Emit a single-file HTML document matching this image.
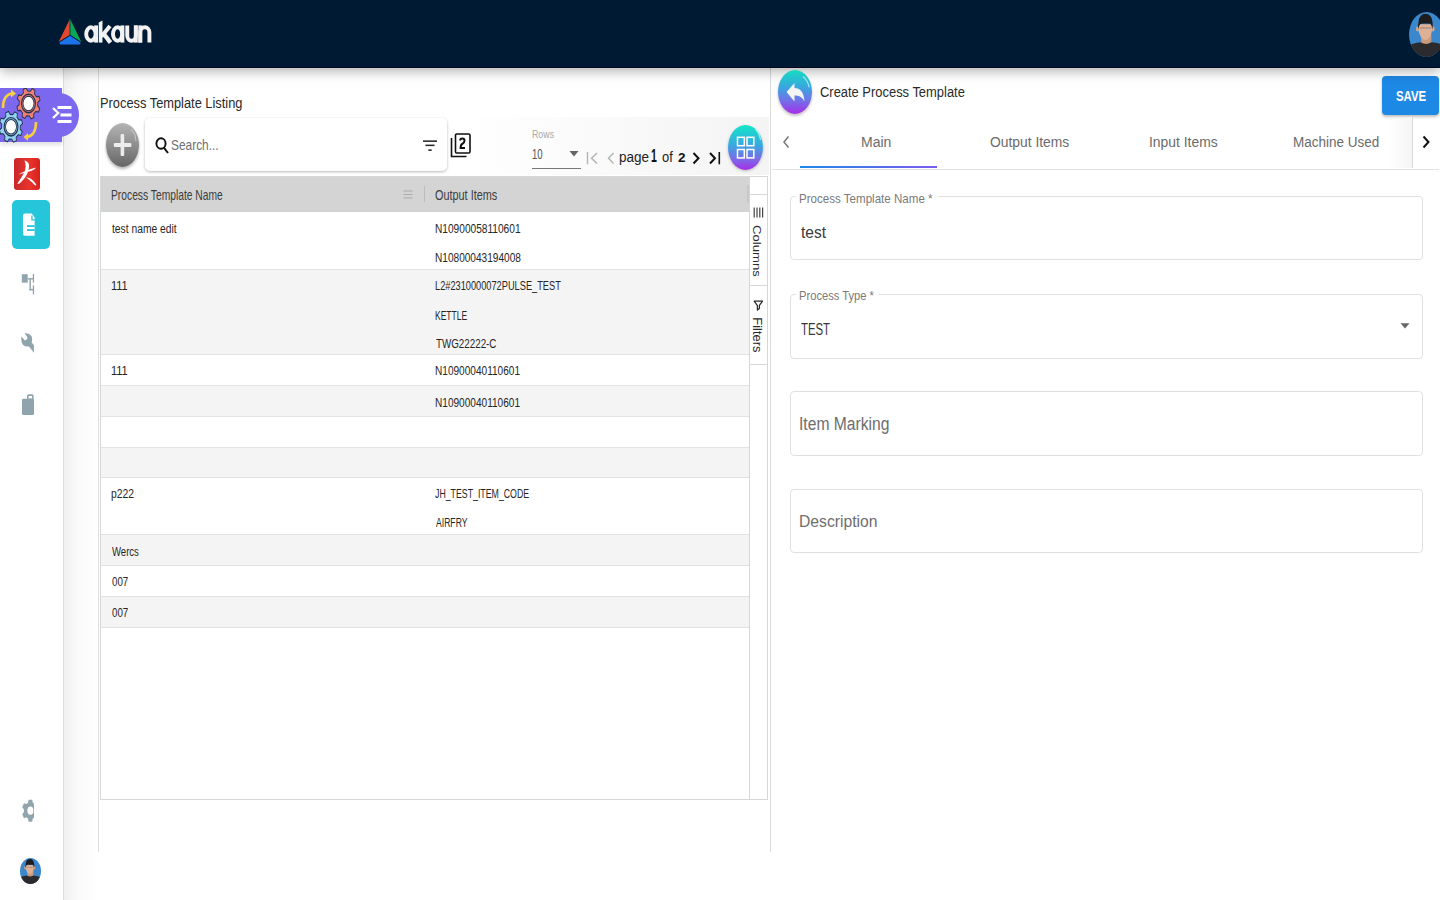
<!DOCTYPE html>
<html><head><meta charset="utf-8">
<style>
*{margin:0;padding:0;box-sizing:border-box}
html,body{width:1440px;height:900px;overflow:hidden;background:#fff;font-family:"Liberation Sans",sans-serif;position:relative}
.a{position:absolute}
.t{position:absolute;white-space:nowrap;line-height:1;transform-origin:0 0}
</style></head><body>
<!-- sidebar -->
<div class="a" style="left:0;top:68px;width:63px;height:832px;background:#fff"></div>
<div class="a" style="left:63px;top:68px;width:1px;height:832px;background:#dcdcdc"></div>
<div class="a" style="left:64px;top:68px;width:34px;height:832px;background:linear-gradient(90deg,#f0f0f0,#fafafa 40%,#fff)"></div>
<!-- main panels -->
<div class="a" style="left:98px;top:68px;width:1px;height:784px;background:#dedede"></div>
<div class="a" style="left:770px;top:68px;width:1px;height:784px;background:#dadada"></div>
<!-- toolbar gradient -->
<div class="a" style="left:460px;top:117px;width:309px;height:58px;background:linear-gradient(90deg,#fff,#f4f4f4)"></div>
<!-- grid -->
<div class="a" style="left:100px;top:176px;width:668px;height:624px;border:1px solid #d5d8db;background:#fff"></div>
<div class="a" style="left:101px;top:177px;width:648px;height:35px;background:#d4d4d4;border-bottom:1.6px solid #cdd2d5"></div>
<div class="a" style="left:749px;top:177px;width:1px;height:623px;background:#d5d8db"></div>
<div class="a" style="left:750px;top:194px;width:17px;height:1px;background:#d5d8db"></div>
<div class="a" style="left:750px;top:285px;width:17px;height:1px;background:#d5d8db"></div>
<div class="a" style="left:750px;top:364px;width:17px;height:1px;background:#d5d8db"></div>
<!-- rows -->
<div class="a" style="left:101px;top:269px;width:648px;height:86px;background:#f4f4f4"></div>
<div class="a" style="left:101px;top:385px;width:648px;height:31px;background:#f4f4f4"></div>
<div class="a" style="left:101px;top:447px;width:648px;height:31px;background:#f4f4f4"></div>
<div class="a" style="left:101px;top:534px;width:648px;height:32px;background:#f4f4f4"></div>
<div class="a" style="left:101px;top:596px;width:648px;height:31px;background:#f4f4f4"></div>
<div class="a" style="left:101px;top:269px;width:648px;height:1px;background:#dfe3e6"></div>
<div class="a" style="left:101px;top:354px;width:648px;height:1px;background:#dfe3e6"></div>
<div class="a" style="left:101px;top:385px;width:648px;height:1px;background:#dfe3e6"></div>
<div class="a" style="left:101px;top:416px;width:648px;height:1px;background:#dfe3e6"></div>
<div class="a" style="left:101px;top:447px;width:648px;height:1px;background:#dfe3e6"></div>
<div class="a" style="left:101px;top:477px;width:648px;height:1px;background:#dfe3e6"></div>
<div class="a" style="left:101px;top:534px;width:648px;height:1px;background:#dfe3e6"></div>
<div class="a" style="left:101px;top:565px;width:648px;height:1px;background:#dfe3e6"></div>
<div class="a" style="left:101px;top:596px;width:648px;height:1px;background:#dfe3e6"></div>
<div class="a" style="left:101px;top:627px;width:648px;height:1px;background:#dfe3e6"></div>
<!-- search box -->
<div class="a" style="left:145px;top:118px;width:302px;height:53px;background:#fff;border-radius:5px;box-shadow:0 1px 3px rgba(0,0,0,.28)"></div>
<!-- right panel -->
<div class="a" style="left:772px;top:169px;width:667px;height:1px;background:#e3e3e3"></div>
<div class="a" style="left:800px;top:165.5px;width:137px;height:2.3px;background:linear-gradient(90deg,#1e88e5,#7b5cf0)"></div>
<div class="a" style="left:1382px;top:76px;width:57px;height:39px;background:#1e88e5;border-radius:4px;box-shadow:0 2px 3px rgba(0,0,0,.25)"></div>
<!-- fields -->
<div class="a" style="left:790px;top:196px;width:633px;height:64px;border:1px solid #e0e0e0;border-radius:4px"></div>
<div class="a" style="left:790px;top:294px;width:633px;height:65px;border:1px solid #e0e0e0;border-radius:4px"></div>
<div class="a" style="left:790px;top:391px;width:633px;height:65px;border:1px solid #e0e0e0;border-radius:4px"></div>
<div class="a" style="left:790px;top:489px;width:633px;height:64px;border:1px solid #e0e0e0;border-radius:4px"></div>
<div class="a" style="left:796px;top:194px;width:142px;height:4px;background:#fff"></div>
<div class="a" style="left:796px;top:292px;width:83px;height:4px;background:#fff"></div>
<!-- header -->
<div class="a" style="left:0;top:0;width:1440px;height:68px;background:#011a33;border-bottom:1px solid #000a20;box-shadow:0 3px 12px rgba(0,0,0,.32)"></div>

<!-- logo triangle -->
<svg class="a" style="left:57px;top:18px" width="26" height="28" viewBox="0 0 26 28">
 <path d="M12.6,1.4 Q13,0.9 13,1.6 V17 L2.3,23.8 Q1.8,24 2,23.3 Q7,13 12.6,1.4 Z" fill="#e4472b"/>
 <path d="M13.4,1.4 Q13,0.9 13,1.6 V17 L23.7,23.8 Q24.2,24 24,23.3 Q19,13 13.4,1.4 Z" fill="#07a75a"/>
 <path d="M13,17.6 L23.2,24.3 Q24,25.2 23,26.2 Q22.3,26.6 21,26.6 H5 Q3.7,26.6 3,26.2 Q2,25.2 2.8,24.3 Z" fill="#1b73ea"/>
 <path d="M13,1.5 V17 M2.5,23.8 L13,17.2 L23.5,23.8" fill="none" stroke="#011a33" stroke-width="0.7"/>
</svg>
<svg class="a" style="left:80px;top:15px" width="75" height="33" viewBox="0 0 75 33">
 <g fill="none" stroke="#f2f2f2">
  <ellipse cx="10.9" cy="19" rx="4.7" ry="6.7" stroke-width="3.9"/>
  <line x1="16.05" y1="10.4" x2="16.05" y2="27.6" stroke-width="3.9"/>
  <line x1="20.6" y1="8.5" x2="20.6" y2="27.6" stroke-width="3.7"/>
  <line x1="21.5" y1="21.5" x2="30" y2="11" stroke-width="4"/>
  <line x1="23.5" y1="18.5" x2="30.5" y2="27.6" stroke-width="4.3"/>
  <ellipse cx="37.6" cy="19" rx="4.6" ry="6.7" stroke-width="3.9"/>
  <line x1="42.4" y1="10.4" x2="42.4" y2="27.6" stroke-width="3.9"/>
  <path d="M47.25,10.4 V20.5 A4.3,5.2 0 0 0 55.85,20.5 V10.4" stroke-width="3.9"/>
  <line x1="55.85" y1="10.4" x2="55.85" y2="27.6" stroke-width="3.9"/>
  <line x1="60.25" y1="10.4" x2="60.25" y2="27.6" stroke-width="3.9"/>
  <path d="M60.25,27.6 V17.5 A4.55,5.2 0 0 1 69.4,17.5 V27.6" stroke-width="3.9"/>
 </g>
 <polygon points="18.75,7.6 22.45,5.6 22.45,9 18.75,9" fill="#f2f2f2"/>
</svg>
<!-- top avatar -->
<div class="a" style="left:1409px;top:12px;width:35px;height:45px;border-radius:50%;overflow:hidden"><svg width="100%" height="100%" viewBox="0 0 36 44" preserveAspectRatio="none" style="display:block">
   <rect width="36" height="44" fill="#3b87cb"/>
   <rect x="12.5" y="22" width="10.5" height="10" fill="#c99a7c"/>
   <path d="M0,33 Q4,30 12,29.5 Q17.5,33 23,29.5 Q31,30 36,33 V44 H0 Z" fill="#2b2b2d"/>
   <ellipse cx="8.8" cy="16.5" rx="1.6" ry="2.6" fill="#d2a688"/>
   <ellipse cx="24.8" cy="16.5" rx="1.6" ry="2.6" fill="#d2a688"/>
   <path d="M9.5,12 Q9.5,26 17,27.5 Q24,26 24,12 Z" fill="#dcb196"/>
   <path d="M9.8,10 Q8.5,14 9.6,17 Q10.3,12 12.5,11.5 Q18,11 22,11.5 Q23.5,13 24,17 Q25,13 24,9 Q23,2 17,1.8 Q10.5,2 9.8,10 Z" fill="#1d1d1f"/>
   <rect x="11" y="15" width="12" height="1.2" fill="#8f7a70" opacity=".7"/>
</svg></div>
<!-- sidebar purple banner -->
<div class="a" style="left:0;top:88px;width:62px;height:54px;background:#7b68ee;box-shadow:0 3px 4px rgba(0,0,0,.12)"></div>
<div class="a" style="left:40px;top:93px;width:39px;height:44px;border-radius:50%;background:#7b68ee"></div>
<svg class="a" style="left:50px;top:104px" width="24" height="21" viewBox="0 0 24 21">
 <polyline points="3,4 8.2,9 3,14" fill="none" stroke="#fff" stroke-width="2.3"/>
 <rect x="7.5" y="2" width="14" height="3" fill="#fff"/>
 <rect x="10.5" y="9.5" width="11" height="3" fill="#fff"/>
 <rect x="7.5" y="16" width="14" height="3" fill="#fff"/>
</svg>
<svg class="a" style="left:0;top:88px" width="42" height="56" viewBox="0 0 42 56">
 <g transform="translate(28.5,15.5) scale(0.91,1.21)">
  <path d="M10.09,2.05 L12.35,4.06 L10.90,7.09 L7.91,6.59 L5.69,8.58 L5.86,11.60 L2.69,12.72 L0.93,10.26 L-2.05,10.09 L-4.06,12.35 L-7.09,10.90 L-6.59,7.91 L-8.58,5.69 L-11.60,5.86 L-12.72,2.69 L-10.26,0.93 L-10.09,-2.05 L-12.35,-4.06 L-10.90,-7.09 L-7.91,-6.59 L-5.69,-8.58 L-5.86,-11.60 L-2.69,-12.72 L-0.93,-10.26 L2.05,-10.09 L4.06,-12.35 L7.09,-10.90 L6.59,-7.91 L8.58,-5.69 L11.60,-5.86 L12.72,-2.69 L10.26,-0.93 Z" fill="#ee7f74" stroke="#23304e" stroke-width="0.9"/>
  <circle cx="0" cy="0" r="7.6" fill="none" stroke="#23304e" stroke-width="1.2"/>
  <circle cx="0" cy="0" r="6.0" fill="#fff" stroke="#23304e" stroke-width="0.9"/>
 </g>
 <g transform="translate(11,38.8) scale(0.91,1.21)">
  <path d="M10.09,2.05 L12.35,4.06 L10.90,7.09 L7.91,6.59 L5.69,8.58 L5.86,11.60 L2.69,12.72 L0.93,10.26 L-2.05,10.09 L-4.06,12.35 L-7.09,10.90 L-6.59,7.91 L-8.58,5.69 L-11.60,5.86 L-12.72,2.69 L-10.26,0.93 L-10.09,-2.05 L-12.35,-4.06 L-10.90,-7.09 L-7.91,-6.59 L-5.69,-8.58 L-5.86,-11.60 L-2.69,-12.72 L-0.93,-10.26 L2.05,-10.09 L4.06,-12.35 L7.09,-10.90 L6.59,-7.91 L8.58,-5.69 L11.60,-5.86 L12.72,-2.69 L10.26,-0.93 Z" fill="#92d3f2" stroke="#23304e" stroke-width="0.9"/>
  <circle cx="0" cy="0" r="7.6" fill="none" stroke="#23304e" stroke-width="1.2"/>
  <circle cx="0" cy="0" r="6.0" fill="#fff" stroke="#23304e" stroke-width="0.9"/>
 </g>
 <path d="M3,20 C3,11 6,6.5 12,5.5" fill="none" stroke="#f6d03c" stroke-width="2.6"/>
 <polygon points="11,1.5 16,5.5 11,9.5" fill="#f6d03c"/>
 <path d="M36,34 C36,43 33,48 27,49" fill="none" stroke="#f6d03c" stroke-width="2.6"/>
 <polygon points="28,45 23.5,49 28,53" fill="#f6d03c"/>
</svg>
<!-- red icon -->
<div class="a" style="left:14px;top:158px;width:26px;height:32px;border-radius:3px;background:linear-gradient(90deg,#c8262a,#e8352c 60%,#d8201c)"></div>
<svg class="a" style="left:14px;top:158px" width="26" height="32" viewBox="0 0 26 32">
 <path d="M10.5,2.5 C13,3 15.5,5 15,9 C14.5,15 11,21 5.5,25.5 L3.5,26 C4,24 8,19 10.5,14 C12,10 12,6 10.5,2.5 Z" fill="#fff"/>
 <path d="M4.5,16.5 C9,14 15,11 22,9.5 C21,11.5 19,12.5 16,13.2 C12,14.2 8,15.5 4.5,16.5 Z" fill="#fff"/>
 <path d="M12,19.5 C15,19.5 19,21 22.5,27 C22,27.5 21,27.5 20.5,27 C18,24 15,21.5 12,19.5 Z" fill="#fff"/>
</svg>
<!-- teal doc icon -->
<div class="a" style="left:11.6px;top:200px;width:38.2px;height:48.5px;border-radius:5px;background:#26c6da"></div>
<svg class="a" style="left:23px;top:213px" width="12" height="24" viewBox="0 0 12 24">
 <path d="M2,0.6 H8.6 L11.6,4.2 V22.8 H2 Q0,22.8 0,20.8 V2.6 Q0,0.6 2,0.6 Z" fill="#fff"/>
 <polyline points="8.9,2.6 8.9,6.9 11.8,6.9" fill="none" stroke="#26c6da" stroke-width="1.3"/>
 <rect x="4" y="12.2" width="7.6" height="1.8" fill="#26c6da"/>
 <rect x="4" y="16.2" width="7.6" height="1.8" fill="#26c6da"/>
</svg>
<!-- gray icons -->
<svg class="a" style="left:21px;top:274px" width="14" height="21" viewBox="0 0 14 21">
 <rect x="0.8" y="0.2" width="5.9" height="8.5" fill="#90a4ae"/>
 <rect x="6.5" y="4.1" width="6.4" height="1.4" fill="#90a4ae"/>
 <rect x="11.8" y="0" width="1.3" height="8.6" fill="#90a4ae"/>
 <rect x="8.5" y="5" width="1.4" height="11.4" fill="#90a4ae"/>
 <rect x="8.5" y="14.9" width="4.4" height="1.5" fill="#90a4ae"/>
 <rect x="11.8" y="11.4" width="1.3" height="9" fill="#90a4ae"/>
</svg>
<svg class="a" style="left:20px;top:332px" width="15" height="22" viewBox="0 0 15 22">
 <path d="M1.4,4.6 L5,8.5 Q8,7.2 7.2,5 L4.6,1.2 Q9.5,0.6 11.8,4.8 Q12.6,8 11.6,10.6 L13.9,13 L14,20.8 L9,14.4 Q5.5,15.2 3.2,13 Q0.8,10.5 1.4,4.6 Z" fill="#90a4ae"/>
</svg>
<svg class="a" style="left:21px;top:394px" width="14" height="22" viewBox="0 0 14 22">
 <rect x="1" y="4.8" width="12" height="16.2" rx="1.3" fill="#90a4ae"/>
 <path d="M6,5 V1.8 Q6,0.3 7.5,0.3 H11.2 Q12.6,0.3 12.6,1.8 V5 Z M7.6,2 V4.6 H11 V2 Z" fill="#90a4ae" fill-rule="evenodd"/>
</svg>
<!-- settings gear bottom -->
<svg class="a" style="left:21px;top:799px" width="13" height="24" viewBox="0 0 13 24">
 <path d="M6.99,3.79 L7.61,0.74 L11.19,0.74 L11.81,3.79 L13.46,5.03 L15.79,4.21 L17.58,8.24 L15.87,10.46 L15.87,12.94 L17.58,15.16 L15.79,19.19 L13.46,18.37 L11.81,19.61 L11.19,22.66 L7.61,22.66 L6.99,19.61 L5.34,18.37 L3.01,19.19 L1.22,15.16 L2.93,12.94 L2.93,10.46 L1.22,8.24 L3.01,4.21 L5.34,5.03 Z M12.4,11.7 A3,4.1 0 1 0 6.4,11.7 A3,4.1 0 1 0 12.4,11.7 Z" fill="#90a4ae" fill-rule="evenodd"/>
</svg>
<!-- bottom avatar -->
<div class="a" style="left:20px;top:858px;width:21px;height:26px;border-radius:50%;overflow:hidden"><svg width="100%" height="100%" viewBox="0 0 36 44" preserveAspectRatio="none" style="display:block">
   <rect width="36" height="44" fill="#3b87cb"/>
   <rect x="12.5" y="22" width="10.5" height="10" fill="#c99a7c"/>
   <path d="M0,33 Q4,30 12,29.5 Q17.5,33 23,29.5 Q31,30 36,33 V44 H0 Z" fill="#2b2b2d"/>
   <ellipse cx="8.8" cy="16.5" rx="1.6" ry="2.6" fill="#d2a688"/>
   <ellipse cx="24.8" cy="16.5" rx="1.6" ry="2.6" fill="#d2a688"/>
   <path d="M9.5,12 Q9.5,26 17,27.5 Q24,26 24,12 Z" fill="#dcb196"/>
   <path d="M9.8,10 Q8.5,14 9.6,17 Q10.3,12 12.5,11.5 Q18,11 22,11.5 Q23.5,13 24,17 Q25,13 24,9 Q23,2 17,1.8 Q10.5,2 9.8,10 Z" fill="#1d1d1f"/>
   <rect x="11" y="15" width="12" height="1.2" fill="#8f7a70" opacity=".7"/>
</svg></div>
<!-- add button -->
<div class="a" style="left:106px;top:123px;width:33px;height:44px;border-radius:50%;background:linear-gradient(180deg,#b4b4b4,#8a8a8a 55%,#666);box-shadow:0 2px 3px rgba(0,0,0,.3)"></div>
<svg class="a" style="left:106px;top:123px" width="33" height="44" viewBox="0 0 33 44">
 <rect x="14.6" y="11" width="3.6" height="22" rx="1" fill="#ececec"/>
 <rect x="7.8" y="20" width="17.6" height="4" rx="1" fill="#ececec"/>
 <path d="M25,6 Q30,11 30,18" fill="none" stroke="#ddd" stroke-width="0.7"/>
</svg>
<!-- search icon -->
<svg class="a" style="left:155px;top:137px" width="15" height="17" viewBox="0 0 15 17">
 <ellipse cx="6" cy="6.5" rx="4.6" ry="5.2" fill="none" stroke="#111" stroke-width="1.9"/>
 <line x1="9" y1="10.8" x2="13" y2="16" stroke="#111" stroke-width="2"/>
</svg>
<!-- filter icon -->
<svg class="a" style="left:422px;top:140px" width="16" height="12" viewBox="0 0 16 12">
 <rect x="1" y="0.4" width="14" height="1.5" fill="#222"/>
 <rect x="3.5" y="4.6" width="9" height="1.5" fill="#222"/>
 <rect x="6.3" y="9.4" width="3.4" height="1.5" fill="#222"/>
</svg>
<!-- copy icon -->
<svg class="a" style="left:450px;top:133px" width="22" height="26" viewBox="0 0 22 26">
 <rect x="5.5" y="1" width="14.5" height="19" rx="1.3" fill="none" stroke="#111" stroke-width="1.6"/>
 <path d="M1.5,5 V23.5 H16.5" fill="none" stroke="#111" stroke-width="1.6"/>
 <path d="M10.2,7.4 Q10.2,5.6 12.4,5.6 Q14.5,5.6 14.5,7.8 Q14.5,9.8 12.2,11 Q10.6,11.8 10.6,15 H15" fill="none" stroke="#111" stroke-width="2"/>
</svg>
<!-- rows select -->
<div class="a" style="left:532px;top:168px;width:49px;height:1px;background:#777"></div>
<svg class="a" style="left:569px;top:151px" width="10" height="6" viewBox="0 0 10 6"><polygon points="0.5,0 9.5,0 5,5.5" fill="#666"/></svg>
<!-- pagination icons -->
<svg class="a" style="left:585px;top:150px" width="140" height="16" viewBox="0 0 140 16">
 <rect x="1.8" y="2" width="1.4" height="12.3" fill="#b5b5b5"/>
 <polyline points="12,3 6.5,8.2 12,13.5" fill="none" stroke="#b5b5b5" stroke-width="1.5"/>
 <polyline points="28.5,3 23.5,8.2 28.5,13.5" fill="none" stroke="#b5b5b5" stroke-width="1.5"/>
 <polyline points="108.5,3 113.5,8.2 108.5,13.5" fill="none" stroke="#111" stroke-width="2"/>
 <polyline points="125,3 130,8.2 125,13.5" fill="none" stroke="#111" stroke-width="2"/>
 <rect x="133.5" y="2" width="1.6" height="12.3" fill="#111"/>
</svg>
<!-- grid fab -->
<div class="a" style="left:728px;top:125px;width:35px;height:45px;border-radius:50%;background:linear-gradient(180deg,#12e6c8 0%,#3aa8e0 45%,#7a6ce8 75%,#a62ee6 100%);box-shadow:0 1px 3px rgba(0,0,0,.25)"></div>
<svg class="a" style="left:728px;top:125px" width="35" height="45" viewBox="0 0 35 45">
 <rect x="9.5" y="12.3" width="6.8" height="8.4" fill="none" stroke="#fff" stroke-width="1.5"/>
 <rect x="19" y="12.3" width="6.8" height="8.4" fill="none" stroke="#fff" stroke-width="1.5"/>
 <rect x="9.5" y="24.5" width="6.8" height="8.4" fill="none" stroke="#fff" stroke-width="1.5"/>
 <rect x="19" y="24.5" width="6.8" height="8.4" fill="none" stroke="#fff" stroke-width="1.5"/>
 <path d="M27.6,4.4 Q31.5,8.5 32.5,15" fill="none" stroke="rgba(210,255,255,.75)" stroke-width="1.1"/>
</svg>
<!-- grid header icons -->
<svg class="a" style="left:403px;top:190px" width="10" height="9" viewBox="0 0 10 9">
 <rect x="0.5" y="0.5" width="9" height="1" fill="#aaa"/><rect x="0.5" y="4" width="9" height="1" fill="#aaa"/><rect x="0.5" y="7.5" width="9" height="1" fill="#aaa"/>
</svg>
<div class="a" style="left:424px;top:186px;width:1px;height:16px;background:#bdbdbd"></div>
<div class="a" style="left:747px;top:185px;width:1.5px;height:18px;background:#c8c8c8"></div>
<!-- grid side icons -->
<svg class="a" style="left:753px;top:207px" width="11" height="11" viewBox="0 0 11 11">
 <rect x="0.6" y="0.5" width="1.2" height="10" fill="#444"/><rect x="3.4" y="0.5" width="1.2" height="10" fill="#444"/><rect x="6.2" y="0.5" width="1.2" height="10" fill="#444"/><rect x="9" y="0.5" width="1.2" height="10" fill="#444"/>
</svg>
<svg class="a" style="left:753px;top:300px" width="11" height="11" viewBox="0 0 11 11">
 <path d="M1.2,1.2 H9.6 L6.4,5.4 V8.4 L4.4,10 V5.6 Z" fill="none" stroke="#2a2a2a" stroke-width="1.25" stroke-linejoin="round"/>
</svg>
<!-- back fab -->
<div class="a" style="left:778px;top:70px;width:34px;height:44px;border-radius:50%;background:linear-gradient(180deg,#14dcc0 0%,#3aa5e0 40%,#6a7ae8 65%,#a62ee6 100%);box-shadow:0 2px 3px rgba(0,0,0,.25)"></div>
<svg class="a" style="left:778px;top:70px" width="34" height="44" viewBox="0 0 34 44">
 <path d="M8.5,22 L16.5,13 V18 C22,18 26,22 26.5,31.5 C24,26.5 21,25.5 16.5,25.5 V31.5 Z" fill="#f4f4f4"/>
 <path d="M24.9,6.4 Q29.5,10 31.3,17.4" fill="none" stroke="rgba(210,255,255,.75)" stroke-width="1.1"/>
</svg>
<!-- tab arrows -->
<svg class="a" style="left:781px;top:135px" width="10" height="14" viewBox="0 0 10 14">
 <polyline points="7.5,1.5 3,7 7.5,12.5" fill="none" stroke="#777" stroke-width="1.5"/>
</svg>
<div class="a" style="left:1388px;top:117px;width:24px;height:51px;background:linear-gradient(90deg,rgba(255,255,255,0),#f6f6f6)"></div>
<div class="a" style="left:1412px;top:117px;width:1px;height:51px;background:#d8d8d8"></div>
<svg class="a" style="left:1420px;top:135px" width="12" height="14" viewBox="0 0 12 14">
 <polyline points="3.5,1.5 8.5,7 3.5,12.5" fill="none" stroke="#111" stroke-width="2"/>
</svg>
<!-- dropdown arrow -->
<svg class="a" style="left:1400px;top:323px" width="10" height="6" viewBox="0 0 10 6"><polygon points="0.5,0.3 9.5,0.3 5,5.5" fill="#666"/></svg>

<div class="t" style="left:99.60px;top:95.43px;font-size:15.2px;font-weight:400;color:#2a2a2a;transform:scaleX(0.8453);">Process Template Listing</div>
<div class="t" style="left:170.63px;top:137.53px;font-size:14.5px;font-weight:400;color:#6f6f6f;transform:scaleX(0.8211);">Search...</div>
<div class="t" style="left:531.51px;top:128.57px;font-size:10.9px;font-weight:400;color:#a8a8a8;transform:scaleX(0.8096);">Rows</div>
<div class="t" style="left:531.60px;top:145.66px;font-size:15.4px;font-weight:400;color:#555;transform:scaleX(0.6209);">10</div>
<div class="t" style="left:618.75px;top:149.05px;font-size:15.3px;font-weight:400;color:#222;transform:scaleX(0.8842);">page</div>
<div class="t" style="left:651.05px;top:148.19px;font-size:17.5px;font-weight:700;color:#111;transform:scaleX(0.5973);">1</div>
<div class="t" style="left:662.30px;top:150.15px;font-size:14px;font-weight:400;color:#222;transform:scaleX(0.9215);">of</div>
<div class="t" style="left:678.48px;top:151.84px;font-size:12px;font-weight:700;color:#111;transform:scaleX(1.1167);">2</div>
<div class="t" style="left:110.80px;top:187.58px;font-size:14.2px;font-weight:400;color:#3c3c3c;transform:scaleX(0.7242);">Process Template Name</div>
<div class="t" style="left:435.09px;top:187.58px;font-size:14.2px;font-weight:400;color:#3c3c3c;transform:scaleX(0.7658);">Output Items</div>
<div class="t" style="left:111.80px;top:221.90px;font-size:13.7px;font-weight:400;color:#262626;transform:scaleX(0.7526);">test name edit</div>
<div class="t" style="left:434.81px;top:222.00px;font-size:13.7px;font-weight:400;color:#262626;transform:scaleX(0.7409);">N10900058110601</div>
<div class="t" style="left:434.81px;top:251.00px;font-size:13.7px;font-weight:400;color:#262626;transform:scaleX(0.7378);">N10800043194008</div>
<div class="t" style="left:111.31px;top:279.30px;font-size:13.7px;font-weight:400;color:#262626;transform:scaleX(0.8036);">111</div>
<div class="t" style="left:435.08px;top:279.30px;font-size:13.7px;font-weight:400;color:#262626;transform:scaleX(0.6746);">L2#2310000072PULSE_TEST</div>
<div class="t" style="left:435.13px;top:308.70px;font-size:13.7px;font-weight:400;color:#262626;transform:scaleX(0.6225);">KETTLE</div>
<div class="t" style="left:435.65px;top:336.50px;font-size:13.7px;font-weight:400;color:#262626;transform:scaleX(0.7158);">TWG22222-C</div>
<div class="t" style="left:111.31px;top:364.30px;font-size:13.7px;font-weight:400;color:#262626;transform:scaleX(0.8036);">111</div>
<div class="t" style="left:435.01px;top:364.30px;font-size:13.7px;font-weight:400;color:#262626;transform:scaleX(0.7365);">N10900040110601</div>
<div class="t" style="left:435.01px;top:396.00px;font-size:13.7px;font-weight:400;color:#262626;transform:scaleX(0.7365);">N10900040110601</div>
<div class="t" style="left:111.35px;top:486.80px;font-size:13.7px;font-weight:400;color:#262626;transform:scaleX(0.7569);">p222</div>
<div class="t" style="left:435.06px;top:486.80px;font-size:13.7px;font-weight:400;color:#262626;transform:scaleX(0.6412);">JH_TEST_ITEM_CODE</div>
<div class="t" style="left:435.60px;top:516.20px;font-size:13.7px;font-weight:400;color:#262626;transform:scaleX(0.6300);">AIRFRY</div>
<div class="t" style="left:112.00px;top:545.00px;font-size:13.7px;font-weight:400;color:#262626;transform:scaleX(0.6975);">Wercs</div>
<div class="t" style="left:111.69px;top:574.60px;font-size:13.7px;font-weight:400;color:#262626;transform:scaleX(0.7132);">007</div>
<div class="t" style="left:111.69px;top:606.00px;font-size:13.7px;font-weight:400;color:#262626;transform:scaleX(0.7132);">007</div>
<div class="t" style="left:820.19px;top:84.02px;font-size:15.1px;font-weight:400;color:#2a2a2a;transform:scaleX(0.8561);">Create Process Template</div>
<div class="t" style="left:1396.32px;top:87.82px;font-size:15.1px;font-weight:700;color:#fff;transform:scaleX(0.7545);">SAVE</div>
<div class="t" style="left:861.40px;top:135.35px;font-size:14px;font-weight:400;color:#6b6b6b;transform:scaleX(1.0012);">Main</div>
<div class="t" style="left:990.05px;top:135.15px;font-size:14px;font-weight:400;color:#6b6b6b;transform:scaleX(0.9892);">Output Items</div>
<div class="t" style="left:1148.52px;top:135.15px;font-size:14px;font-weight:400;color:#6b6b6b;transform:scaleX(0.9908);">Input Items</div>
<div class="t" style="left:1292.75px;top:135.15px;font-size:14px;font-weight:400;color:#6b6b6b;transform:scaleX(0.9634);">Machine Used</div>
<div class="t" style="left:799.10px;top:191.64px;font-size:13.3px;font-weight:400;color:#7a7a7a;transform:scaleX(0.8704);">Process Template Name *</div>
<div class="t" style="left:800.60px;top:224.11px;font-size:17px;font-weight:400;color:#3a3a3a;transform:scaleX(0.9104);">test</div>
<div class="t" style="left:799.03px;top:289.11px;font-size:13.1px;font-weight:400;color:#7a7a7a;transform:scaleX(0.8528);">Process Type *</div>
<div class="t" style="left:800.72px;top:321.47px;font-size:17.4px;font-weight:400;color:#3a3a3a;transform:scaleX(0.6538);">TEST</div>
<div class="t" style="left:799.38px;top:414.76px;font-size:18px;font-weight:400;color:#6e6e6e;transform:scaleX(0.8700);">Item Marking</div>
<div class="t" style="left:799.37px;top:512.87px;font-size:17.4px;font-weight:400;color:#6e6e6e;transform:scaleX(0.9020);">Description</div>
<div class="t" style="left:0;top:0;font-size:12.5px;font-weight:400;color:#2b2b2b;transform:translate(762.61px,224.98px) rotate(90deg) scale(1.0508,0.9369)">Columns</div>
<div class="t" style="left:0;top:0;font-size:12.5px;font-weight:400;color:#2b2b2b;transform:translate(763.44px,317.29px) rotate(90deg) scale(1.0380,1.0240)">Filters</div>
</body></html>
